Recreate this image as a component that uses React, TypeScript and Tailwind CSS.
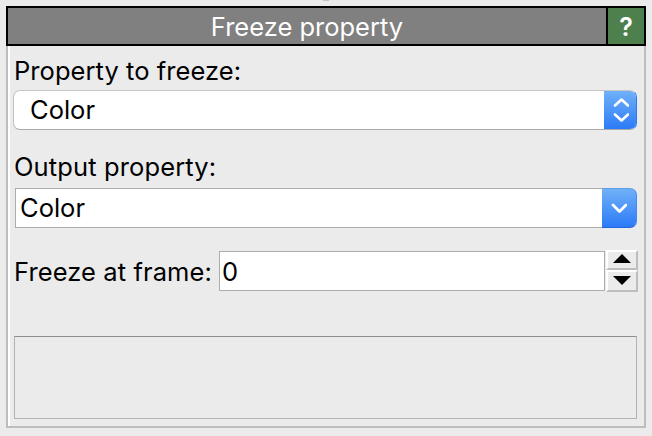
function Label({ children, className = "" }: { children: string; className?: string }) {
  return <span className={`block whitespace-pre leading-8 ${className}`}>{children}</span>;
}

function StepButton({ up = false }: { up?: boolean }) {
  return (
    <button className={`flex w-8 justify-center border-2 border-t-white border-l-white border-r-[#bdbdbd] border-b-[#bdbdbd] bg-[#ebebeb] ${up ? "h-5 pt-[2px]" : "h-[22px] pt-1"}`}>
      <svg className="-ml-px h-[9px] w-[18px]" viewBox="0 0 18 9">
        <path d={up ? "M9 0L18 9H0Z" : "M0 0H18L9 9Z"} fill="#000" />
      </svg>
    </button>
  );
}

export default function App() {
  return (
    <div className="h-[436px] w-[652px] overflow-hidden bg-[#ebebeb] px-1.5 font-['Inter',sans-serif] text-[25.5px] text-black">
      <div className="h-1.5 w-[640px] pl-[317px]">
        <div className="h-px w-1.5 bg-[#c4c4c4]" />
      </div>
      <header className="flex h-10 w-[640px] border-2 border-black bg-[#808080] text-white">
        <div className="flex flex-1 items-start justify-center pt-[3px]">
          <Label>Freeze property</Label>
        </div>
        <div className="flex w-[38px] items-start justify-center border-l-2 border-black bg-[#4e804e] pt-[3px] text-[25px] font-semibold">
          <Label>?</Label>
        </div>
      </header>
      <main className="h-[382px] w-[640px] border-r-2 border-b-2 border-l-2 border-[#bdbdbd]">
        <div className="h-full border-l-2 border-white pt-[9px] pl-1">
          <Label className="h-[35px] tracking-[0.06px]">Property to freeze:</Label>
          <div className="-ml-px flex h-10 w-[624px] overflow-hidden rounded-[7px] border border-t-[#c6c6c6] border-r-[#2f78ee] border-b-[#aaaaaa] border-l-[#c0c0c0] bg-white">
            <Label className="flex-1 pt-[3px] pl-4">Color</Label>
            <div className="-my-px -mr-px flex w-[33px] items-center justify-center border-t border-b border-t-[#5d9fe9] border-b-[#2368dd] bg-linear-to-b from-[#6fb0f8] to-[#2c7af7]">
              <svg className="h-[26px] w-4" viewBox="0 0 16 26" fill="none" stroke="#fff" strokeWidth="2.6" strokeLinecap="round" strokeLinejoin="round">
                <path d="M2 8.5L8.5 2.5L15 8.5M2 17.5L8.5 23.5L15 17.5" />
              </svg>
            </div>
          </div>
          <Label className="mt-[21px] h-[37px] tracking-[0.12px]">Output property:</Label>
          <div className="ml-px flex h-10 w-[622px]">
            <div className="flex-1 border border-r-0 border-[#adadad] bg-white">
              <Label className="pt-[3px] pl-1">Color</Label>
            </div>
            <div className="flex w-[35px] items-center justify-center rounded-r-[7px] border border-l-0 border-t-[#5d9fe9] border-r-[#438bec] border-b-[#2368dd] bg-linear-to-b from-[#6fb0f8] to-[#2c7af7]">
              <svg className="h-[10px] w-4" viewBox="0 0 16 10" fill="none" stroke="#fff" strokeWidth="2.8" strokeLinecap="round" strokeLinejoin="round">
                <path d="M2 2L8.5 8.5L15 2" />
              </svg>
            </div>
          </div>
          <div className="mt-[22px] flex h-[42px]">
            <Label className="w-[205px] pt-[6px] tracking-[0.1px]">Freeze at frame:</Label>
            <div className="mt-px h-10 w-[386px] border border-[#adadad] bg-white">
              <Label className="pt-1 pl-[2px]">0</Label>
            </div>
            <div className="ml-px flex flex-col">
              <StepButton up />
              <StepButton />
            </div>
          </div>
          <div className="mt-11 h-[83px] w-[623px] border border-[#b3b3b3] border-t-[#8e8e8e]" />
        </div>
      </main>
    </div>
  );
}
